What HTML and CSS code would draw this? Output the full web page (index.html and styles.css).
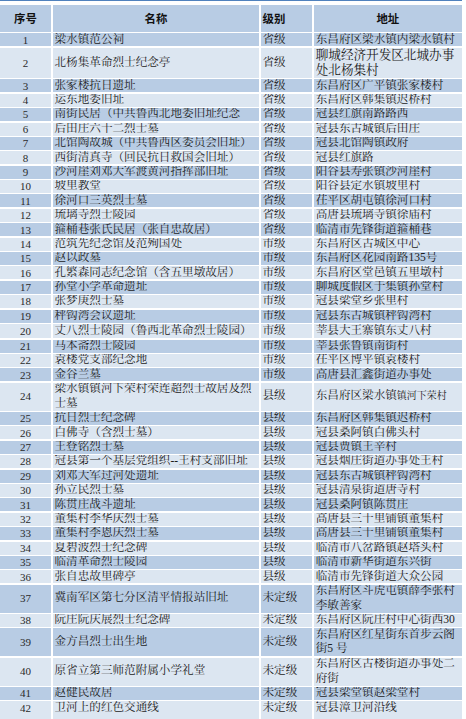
FILE: index.html
```html
<!DOCTYPE html>
<html lang="zh-CN">
<head>
<meta charset="utf-8">
<title>革命遗址名录</title>
<link rel="stylesheet" href="styles.css">
</head>
<body>
<div class="topline"></div>
<div class="sheet">
  <div class="row head">
    <div class="cell num">序号</div>
    <div class="cell center">名称</div>
    <div class="cell">级别</div>
    <div class="cell center">地址</div>
  </div>
  <div class="rows">
    <div class="row"><div class="cell num">1</div><div class="cell">梁水镇范公祠</div><div class="cell">省级</div><div class="cell addr">东昌府区梁水镇内梁水镇村</div></div>
    <div class="row tall-lg"><div class="cell num">2</div><div class="cell">北杨集革命烈士纪念亭</div><div class="cell">省级</div><div class="cell addr big">聊城经济开发区北城办事处北杨集村</div></div>
    <div class="row"><div class="cell num">3</div><div class="cell">张家楼抗日遗址</div><div class="cell">省级</div><div class="cell addr">东昌府区广平镇张家楼村</div></div>
    <div class="row"><div class="cell num">4</div><div class="cell">运东地委旧址</div><div class="cell">省级</div><div class="cell addr">东昌府区韩集镇迟桥村</div></div>
    <div class="row"><div class="cell num">5</div><div class="cell">南街民居（中共鲁西北地委旧址纪念</div><div class="cell">省级</div><div class="cell addr">冠县红旗南路路西</div></div>
    <div class="row"><div class="cell num">6</div><div class="cell">后田庄六十二烈士墓</div><div class="cell">省级</div><div class="cell addr">冠县东古城镇后田庄</div></div>
    <div class="row"><div class="cell num">7</div><div class="cell">北馆陶故城（中共鲁西区委员会旧址）</div><div class="cell">省级</div><div class="cell addr">冠县北馆陶镇政府</div></div>
    <div class="row"><div class="cell num">8</div><div class="cell">西街清真寺（回民抗日救国会旧址）</div><div class="cell">省级</div><div class="cell addr">冠县红旗路</div></div>
    <div class="row"><div class="cell num">9</div><div class="cell">沙河崖刘邓大军渡黄河指挥部旧址</div><div class="cell">省级</div><div class="cell addr">阳谷县寿张镇沙河崖村</div></div>
    <div class="row"><div class="cell num">10</div><div class="cell">坡里教堂</div><div class="cell">省级</div><div class="cell addr">阳谷县定水镇坡里村</div></div>
    <div class="row"><div class="cell num">11</div><div class="cell">徐河口三英烈士墓</div><div class="cell">省级</div><div class="cell addr">茌平区胡屯镇徐河口村</div></div>
    <div class="row"><div class="cell num">12</div><div class="cell">琉璃寺烈士陵园</div><div class="cell">省级</div><div class="cell addr">高唐县琉璃寺镇徐庙村</div></div>
    <div class="row"><div class="cell num">13</div><div class="cell">箍桶巷张氏民居（张自忠故居）</div><div class="cell">省级</div><div class="cell addr">临清市先锋街道箍桶巷</div></div>
    <div class="row"><div class="cell num">14</div><div class="cell">范筑先纪念馆及范殉国处</div><div class="cell">市级</div><div class="cell addr">东昌府区古城区中心</div></div>
    <div class="row"><div class="cell num">15</div><div class="cell">赵以政墓</div><div class="cell">市级</div><div class="cell addr">东昌府区花园南路135号</div></div>
    <div class="row"><div class="cell num">16</div><div class="cell">孔繁森同志纪念馆（含五里墩故居）</div><div class="cell">市级</div><div class="cell addr">东昌府区堂邑镇五里墩村</div></div>
    <div class="row"><div class="cell num">17</div><div class="cell">孙堂小学革命遗址</div><div class="cell">市级</div><div class="cell addr">聊城度假区于集镇孙堂村</div></div>
    <div class="row"><div class="cell num">18</div><div class="cell">张梦庚烈士墓</div><div class="cell">市级</div><div class="cell addr">冠县梁堂乡张里村</div></div>
    <div class="row"><div class="cell num">19</div><div class="cell">秤钩湾会议遗址</div><div class="cell">市级</div><div class="cell addr">冠县东古城镇秤钩湾村</div></div>
    <div class="row mid"><div class="cell num">20</div><div class="cell">丈八烈士陵园（鲁西北革命烈士陵园）</div><div class="cell">市级</div><div class="cell addr">莘县大王寨镇东丈八村</div></div>
    <div class="row"><div class="cell num">21</div><div class="cell">马本斋烈士陵园</div><div class="cell">市级</div><div class="cell addr">莘县张鲁镇南街村</div></div>
    <div class="row"><div class="cell num">22</div><div class="cell">袁楼党支部纪念地</div><div class="cell">市级</div><div class="cell addr">茌平区博平镇袁楼村</div></div>
    <div class="row"><div class="cell num">23</div><div class="cell">金谷兰墓</div><div class="cell">市级</div><div class="cell addr">高唐县汇鑫街道办事处</div></div>
    <div class="row tall"><div class="cell num">24</div><div class="cell">梁水镇镇河下荣村荣连超烈士故居及烈士墓</div><div class="cell">县级</div><div class="cell addr">东昌府区梁水镇<span class="small">镇河下荣村</span></div></div>
    <div class="row"><div class="cell num">25</div><div class="cell">抗日烈士纪念碑</div><div class="cell">县级</div><div class="cell addr">东昌府区韩集镇迟桥村</div></div>
    <div class="row"><div class="cell num">26</div><div class="cell">白佛寺（含烈士墓）</div><div class="cell">县级</div><div class="cell addr">冠县桑阿镇白佛头村</div></div>
    <div class="row"><div class="cell num">27</div><div class="cell">王登铭烈士墓</div><div class="cell">县级</div><div class="cell addr">冠县贾镇王辛村</div></div>
    <div class="row"><div class="cell num">28</div><div class="cell">冠县第一个基层党组织--王村支部旧址</div><div class="cell">县级</div><div class="cell addr">冠县烟庄街道办事处王村</div></div>
    <div class="row"><div class="cell num">29</div><div class="cell">刘邓大军过河处遗址</div><div class="cell">县级</div><div class="cell addr">冠县东古城镇秤钩湾村</div></div>
    <div class="row"><div class="cell num">30</div><div class="cell">孙立民烈士墓</div><div class="cell">县级</div><div class="cell addr">冠县清泉街道唐寺村</div></div>
    <div class="row"><div class="cell num">31</div><div class="cell">陈贯庄战斗遗址</div><div class="cell">县级</div><div class="cell addr">冠县桑阿镇陈贯庄</div></div>
    <div class="row"><div class="cell num">32</div><div class="cell">董集村李华庆烈士墓</div><div class="cell">县级</div><div class="cell addr">高唐县三十里铺镇董集村</div></div>
    <div class="row"><div class="cell num">33</div><div class="cell">董集村李恩庆烈士墓</div><div class="cell">县级</div><div class="cell addr">高唐县三十里铺镇董集村</div></div>
    <div class="row"><div class="cell num">34</div><div class="cell">夏碧波烈士纪念碑</div><div class="cell">县级</div><div class="cell addr">临清市八岔路镇赵塔头村</div></div>
    <div class="row"><div class="cell num">35</div><div class="cell">临清革命烈士陵园</div><div class="cell">县级</div><div class="cell addr">临清市新华街道东兴街</div></div>
    <div class="row"><div class="cell num">36</div><div class="cell">张自忠故里碑亭</div><div class="cell">县级</div><div class="cell addr">临清市先锋街道大众公园</div></div>
    <div class="row tall"><div class="cell num">37</div><div class="cell">冀南军区第七分区清平情报站旧址</div><div class="cell">未定级</div><div class="cell addr">东昌府区斗虎屯镇薛李张村李敏善家</div></div>
    <div class="row"><div class="cell num">38</div><div class="cell">阮庄阮庆展烈士纪念碑</div><div class="cell">未定级</div><div class="cell addr">东昌府区阮庄村中心街西30</div></div>
    <div class="row tall"><div class="cell num">39</div><div class="cell">金方昌烈士出生地</div><div class="cell">未定级</div><div class="cell addr">东昌府区红星街东首步云阁街5 号</div></div>
    <div class="row tall"><div class="cell num">40</div><div class="cell">原省立第三师范附属小学礼堂</div><div class="cell">未定级</div><div class="cell addr">东昌府区古楼街道办事处二府街</div></div>
    <div class="row"><div class="cell num">41</div><div class="cell">赵健民故居</div><div class="cell">未定级</div><div class="cell addr">冠县梁堂镇赵梁堂村</div></div>
    <div class="row last"><div class="cell num">42</div><div class="cell">卫河上的红色交通线</div><div class="cell">未定级</div><div class="cell addr">冠县漳卫河沿线</div></div>
  </div>
</div>
</body>
</html>
```
FILE: styles.css
```css
html, body {
  margin: 0;
  padding: 0;
  background: #ffffff;
}

body {
  color: #1c1c1c;
  font-family: "Liberation Serif", "Noto Serif CJK SC", "Noto Sans CJK SC", serif;
  overflow: hidden;
}

.topline {
  width: 462px;
  height: 1.3px;
  background: #4f81bd;
  margin-bottom: 3.7px;
}

.sheet {
  width: 462px;
  display: flex;
  flex-direction: column;
  gap: 1.4px;
}

.rows {
  display: flex;
  flex-direction: column;
  gap: 1.4px;
}

.row {
  display: grid;
  grid-template-columns: 51px 206px 50.7px 148.3px;
  column-gap: 2px;
  height: 13px;
}

.row.mid { height: 14.2px; }
.row.tall { height: 27.9px; }
.row.tall-lg { height: 30.2px; }
.row.head { height: 27px; }
.row.last { height: 20px; }

.row.last .cell {
  align-items: flex-start;
  padding-top: 0;
}

.rows .row:nth-child(odd) .cell,
.head .cell {
  background: #b8cce4;
}

.rows .row:nth-child(even) .cell {
  background: #dce6f1;
}

.cell {
  display: flex;
  align-items: center;
  padding-left: 1.5px;
  font-size: 11.6px;
  line-height: 14.5px;
  white-space: nowrap;
  overflow: hidden;
}

.cell.addr {
  padding-left: 2px;
}

.tall .cell,
.tall-lg .cell {
  white-space: normal;
}

.cell.big {
  font-size: 12.6px;
  line-height: 15px;
}

.small {
  font-size: 10px;
}

.cell.num {
  justify-content: center;
  padding-left: 0;
  font-size: 11px;
  color: #2a2a2a;
}

.cell.center {
  justify-content: center;
  padding-left: 0;
}

.head .cell {
  font-family: "Noto Sans CJK SC", sans-serif;
  font-weight: 700;
  font-size: 11.4px;
  color: #111;
}
```
